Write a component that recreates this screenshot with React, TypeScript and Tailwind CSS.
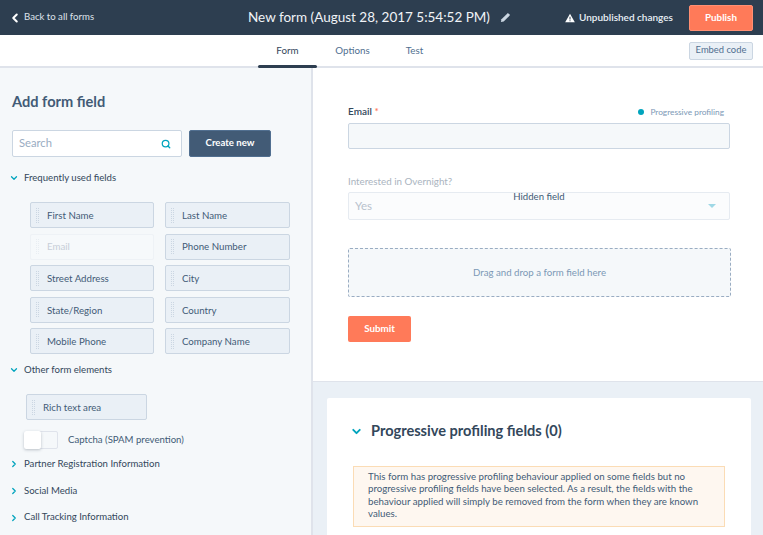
import { ChevronDown, ChevronLeft, ChevronRight, Search } from "lucide-react";
import React from "react";

const fields = [
  "First Name",
  "Last Name",
  "Email",
  "Phone Number",
  "Street Address",
  "City",
  "State/Region",
  "Country",
  "Mobile Phone",
  "Company Name",
];

function FieldChip({ label, muted, className }: { label: string; muted?: boolean; className?: string }) {
  return (
    <div
      className={`flex h-[26px] items-center rounded-[2px] border pl-[5px] text-[9.7px] ${
        muted ? "border-[#eef2f6] bg-[#f6f9fb] text-[#c6ced8]" : "border-[#cbd6e2] bg-[#eaf0f6] text-[#425b76]"
      } ${className ?? ""}`}
    >
      <span className={`h-[15px] w-[3px] border-x border-dotted ${muted ? "border-[#e9eef3]" : "border-[#cbd6e2]"}`} />
      <span className="ml-[8px]">{label}</span>
    </div>
  );
}

function Section({ label, open }: { label: string; open?: boolean }) {
  const Icon = open ? ChevronDown : ChevronRight;
  return (
    <div className="flex h-[14px] items-center pl-[9px] text-[9.6px] text-[#33475b]">
      <Icon size={10} strokeWidth={3} className="text-[#00a4bd]" />
      <span className="ml-[5px]">{label}</span>
    </div>
  );
}

export default function App() {
  return (
    <div className="flex h-[535px] w-[763px] flex-col overflow-hidden bg-white font-['Lato','Noto_Sans',sans-serif] text-[#33475b]">
      <header className="flex h-[35px] shrink-0 items-center bg-[#2d3e50] text-white">
        <ChevronLeft size={14} strokeWidth={3.5} className="ml-[8px]" />
        <span className="ml-[2px] w-[224px] text-[9.6px] text-[#dfe3eb]">Back to all forms</span>
        <span className="w-[244px] whitespace-nowrap text-[13.5px] text-[#f0f3f7]">New form (August 28, 2017 5:54:52 PM)</span>
        <svg viewBox="0 0 12 12" className="ml-[8px] h-[11px] w-[11px] fill-[#cbd6e2]">
          <path d="M8.6 1 11 3.4 4 10.4 1 11 1.6 8z" />
        </svg>
        <svg viewBox="0 0 12 12" className="ml-[54px] h-[10px] w-[10px] fill-white">
          <path d="M6 .8 11.8 11.2H.2zM5.4 4.4v3.4h1.2V4.4zM5.4 8.6v1.2h1.2V8.6z" fillRule="evenodd" />
        </svg>
        <span className="ml-[4px] w-[92px] whitespace-nowrap text-[10px] font-semibold text-[#eaf0f6]">Unpublished changes</span>
        <button className="ml-[18px] h-[26px] w-[64px] rounded-[2px] border border-[#ff8f73] bg-[#ff7a59] text-[9.8px] font-bold text-white">
          Publish
        </button>
      </header>

      <nav className="flex h-[33px] shrink-0 items-center border-b-2 border-[#dfe3eb] text-[9.8px] text-[#516f90]">
        <div className="relative ml-[258px] flex h-full w-[59px] items-center justify-center text-[#33475b]">
          Form
          <span className="absolute inset-x-0 -bottom-[2px] h-[3px] rounded-[2px] bg-[#2d3e50]" />
        </div>
        <div className="flex h-full w-[71px] items-center justify-center">Options</div>
        <div className="flex h-full w-[53px] items-center justify-center">Test</div>
        <button className="ml-[248px] h-[18px] w-[64px] rounded-[2px] border border-[#cbd6e2] bg-[#eaf0f6] text-[9.4px] text-[#516f90]">
          Embed code
        </button>
      </nav>

      <div className="flex min-h-0 flex-1">
        <aside className="w-[313px] shrink-0 border-r-2 border-[#dfe3eb] bg-[#f5f8fa]">
          <h2 className="ml-[12px] mt-[25px] text-[14.6px] leading-[18px] font-bold text-[#425b76]">Add form field</h2>
          <div className="ml-[12px] mt-[19px] flex gap-[7px]">
            <div className="flex h-[27px] w-[170px] items-center justify-between rounded-[2px] border border-[#cbd6e2] bg-white pl-[6px] pr-[10px] text-[11.2px] text-[#99acc2]">
              Search
              <Search size={10} strokeWidth={3} className="text-[#00a4bd]" />
            </div>
            <button className="h-[27px] w-[82px] rounded-[2px] border border-[#516f90] bg-[#425b76] text-[9.6px] font-bold text-white">
              Create new
            </button>
          </div>
          <div className="mt-[14px]">
            <Section label="Frequently used fields" open />
          </div>
          <div className="ml-[30px] mt-[17px] grid w-[260px] grid-cols-[124px_125px] gap-x-[11px] gap-y-[5.6px]">
            {fields.map(f => (
              <FieldChip key={f} label={f} muted={f === "Email"} />
            ))}
          </div>
          <div className="mt-[9px]">
            <Section label="Other form elements" open />
          </div>
          <FieldChip label="Rich text area" className="ml-[26px] mt-[17px] w-[121px]" />
          <div className="ml-[24px] mt-[11px] flex items-center">
            <div className="flex h-[18px] w-[34px] rounded-[2px] border border-[#dfe3eb] bg-[#f5f8fa]">
              <span className="-m-px h-[18px] w-[17px] rounded-[2px] bg-white shadow-[0_1px_3px_rgba(45,62,80,0.3)]" />
            </div>
            <span className="ml-[10px] text-[9.6px] text-[#425b76]">Captcha (SPAM prevention)</span>
          </div>
          <div className="mt-[8px] flex flex-col gap-[12.6px]">
            <Section label="Partner Registration Information" />
            <Section label="Social Media" />
            <Section label="Call Tracking Information" />
          </div>
        </aside>

        <main className="min-w-0 flex-1 bg-[#eaf0f6]">
          <div className="h-[314px] border-b border-[#dfe3eb] bg-white pl-[35px]">
            <div className="flex h-[55px] w-[376px] items-end justify-between pb-[4px]">
              <span className="text-[10px] font-semibold text-[#33475b]">
                Email <span className="text-[#ff7a59]">*</span>
              </span>
              <span className="mb-[1px] flex items-center text-[8.3px] text-[#7c98b6]">
                <span className="mr-[6px] h-[6px] w-[6px] rounded-full bg-[#00a4bd]" />
                Progressive profiling
              </span>
            </div>
            <div className="h-[26px] w-[382px] rounded-[2px] border border-[#cbd6e2] bg-[#f5f8fa]" />
            <div className="mt-[25px] text-[9.8px] leading-[14px] text-[#aab4c0]">Interested in Overnight?</div>
            <div className="relative mt-[4px] flex h-[28px] w-[382px] items-center justify-between rounded-[2px] border border-[#e6ebf1] bg-[#fbfcfd] pl-[6px] pr-[13px] text-[11.5px] text-[#b8c2cd]">
              <span>Yes</span>
              <span className="h-0 w-0 border-x-[4px] border-t-[4px] border-x-transparent border-t-[#9fd8e6]" />
              <span className="absolute inset-x-0 top-[-3px] text-center text-[9.6px] text-[#425b76]">Hidden field</span>
            </div>
            <div className="mt-[28px] flex h-[49px] w-[383px] items-center justify-center rounded-[2px] border border-dashed border-[#99acc2] bg-[#f5f8fa] text-[9.7px] text-[#7c98b6]">
              Drag and drop a form field here
            </div>
            <button className="mt-[19px] block h-[26px] w-[63px] rounded-[2px] bg-[#ff7a59] pb-[2px] text-[9.8px] font-bold text-white">
              Submit
            </button>
          </div>
          <section className="ml-[14px] mt-[16px] h-[200px] w-[424px] rounded-[2px] bg-white pl-[26px] pt-[23px]">
            <div className="flex h-[20px] items-center">
              <ChevronDown size={13} strokeWidth={3.5} className="-ml-[3px] text-[#00a4bd]" />
              <h3 className="ml-[8px] text-[14.6px] font-bold text-[#33475b]">Progressive profiling fields (0)</h3>
            </div>
            <div className="mt-[25px] h-[61px] w-[372px] border border-[#fbdcb5] bg-[#fef7f0] px-[14px] pt-[3px] text-[9.7px] leading-[12.4px] text-[#425b76]">
              This form has progressive profiling behaviour applied on some fields but no progressive profiling fields have been selected. As a result, the fields with the behaviour applied will simply be removed from the form when they are known values.
            </div>
          </section>
        </main>
      </div>
    </div>
  );
}
